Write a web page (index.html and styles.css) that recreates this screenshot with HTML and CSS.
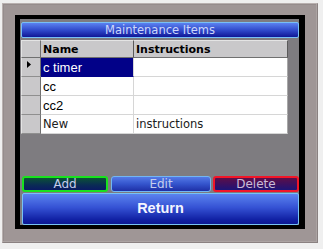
FILE: index.html
```html
<!DOCTYPE html>
<html>
<head>
<meta charset="utf-8">
<link rel="stylesheet" href="styles.css">
</head>
<body>
<div class="frame">
  <div class="screen">
    <div class="title">Maintenance Items</div>
    <div class="grid">
      <div class="rh hdr"></div>
      <div class="hc">Name</div>
      <div class="hc">Instructions</div>

      <div class="rh"><svg class="cur" width="4" height="7" viewBox="0 0 4 7"><path d="M0 0 L4 3.5 L0 7 Z" fill="#000"/></svg></div>
      <div class="c sel">c timer</div>
      <div class="c"></div>

      <div class="rh"></div>
      <div class="c">cc</div>
      <div class="c"></div>

      <div class="rh"></div>
      <div class="c">cc2</div>
      <div class="c"></div>

      <div class="rh"></div>
      <div class="c alt">New</div>
      <div class="c alt">instructions</div>
    </div>
    <div class="spacer"></div>
    <div class="btns">
      <div class="btn add">Add</div>
      <div class="btn edit">Edit</div>
      <div class="btn del">Delete</div>
    </div>
    <div class="ret">Return</div>
  </div>
</div>
</body>
</html>
```

FILE: styles.css
```css
html, body {
  margin: 0;
  padding: 0;
  background: #efefef;
}

.frame {
  box-sizing: border-box;
  margin: 3px 0 0 2px;
  width: 316px;
  height: 240px;
  padding: 11px 12px 13px 12px;
  background: #9f9696;
  border-top: 1px solid #b8b0af;
  border-left: 1px solid #b8b0af;
  border-right: 1px solid #8a8181;
  border-bottom: 1px solid #8a8181;
  box-shadow: inset -1px -1px 0 #aba3a2, inset 1px 1px 0 #958c8c;
}

.screen {
  box-sizing: border-box;
  height: 100%;
  border-style: solid;
  border-color: #000;
  border-width: 4px 6px 4px 5px;
  background: #7e7c80;
  padding: 3px 0 0 1px;
  display: flex;
  flex-direction: column;
}

.title {
  box-sizing: border-box;
  height: 16px;
  flex: none;
  border: 1px solid #78bff5;
  border-radius: 2px;
  background: linear-gradient(#5b82f0, #2e46c8 55%, #0f1796);
  color: #cdd7fb;
  font: 11.5px "DejaVu Sans", sans-serif;
  text-align: center;
  line-height: 14px;
}

.grid {
  margin-top: 2px;
  display: grid;
  grid-template-columns: 20px 93px 154px;
  grid-template-rows: 18px repeat(4, 19px);
  flex: none;
  width: 267px;
}

.rh {
  box-sizing: border-box;
  background: #c9c8ca;
  border-right: 1px solid #707070;
  border-bottom: 1px solid #8f8f8f;
  border-left: 1px solid #e4e4e4;
  display: flex;
  align-items: center;
  padding-left: 5px;
}

.rh.hdr {
  border-top: 1px solid #e4e4e4;
  border-bottom: 1px solid #707070;
}

.cur {
  display: block;
  margin-top: -6px;
}

.hc {
  box-sizing: border-box;
  background: #c9c8ca;
  border-top: 1px solid #e4e4e4;
  border-right: 1px solid #5a5a5a;
  border-bottom: 1px solid #707070;
  font: bold 11px "DejaVu Sans", sans-serif;
  color: #000;
  padding: 2px 0 0 2px;
}

.c {
  box-sizing: border-box;
  background: #fff;
  border-right: 1px solid #d6d6d6;
  border-bottom: 1px solid #d6d6d6;
  font: 13px "Liberation Sans", sans-serif;
  color: #000;
  padding: 1px 0 0 2px;
  line-height: 17px;
}

.c:nth-child(3n) {
  border-right: 1px solid #a8a8a8;
}

.c.alt {
  font: 11.5px "DejaVu Sans", sans-serif;
  color: #202020;
  line-height: 17px;
}

.c.sel {
  background: #020188;
  color: #fff;
  border-bottom-color: #020188;
}

.spacer {
  flex: 1;
}

.btns {
  display: flex;
  margin-left: 1px;
  height: 16px;
  flex: none;
}

.btn {
  box-sizing: border-box;
  height: 16px;
  border-radius: 3px;
  font: 12px "DejaVu Sans", sans-serif;
  text-align: center;
  line-height: 14px;
  color: #c4cdec;
}

.add {
  width: 87px;
  border: 2px solid #19e21e;
  background: linear-gradient(#0c5136, #0a2b55 60%, #0a1a63);
  line-height: 12px;
}

.edit {
  width: 101px;
  margin-left: 3px;
  border: 1px solid #72b6f2;
  background: linear-gradient(#5479e6, #3454cc 50%, #1e2fa6);
}

.del {
  width: 87px;
  margin-left: 2px;
  border: 2px solid #f21628;
  background: linear-gradient(#5c0f48, #3a1062 55%, #1d1478);
  line-height: 12px;
  color: #cbbcd8;
}

.ret {
  box-sizing: border-box;
  margin: 1px 0 0 1px;
  height: 32px;
  flex: none;
  border: 1px solid #77c2f4;
  border-radius: 2px;
  background: linear-gradient(#5b83ef, #3552d4 45%, #1121a4 85%, #0c1894);
  color: #f4f6ff;
  font: bold 14.5px "Liberation Sans", sans-serif;
  text-align: center;
  line-height: 29px;
}
```
